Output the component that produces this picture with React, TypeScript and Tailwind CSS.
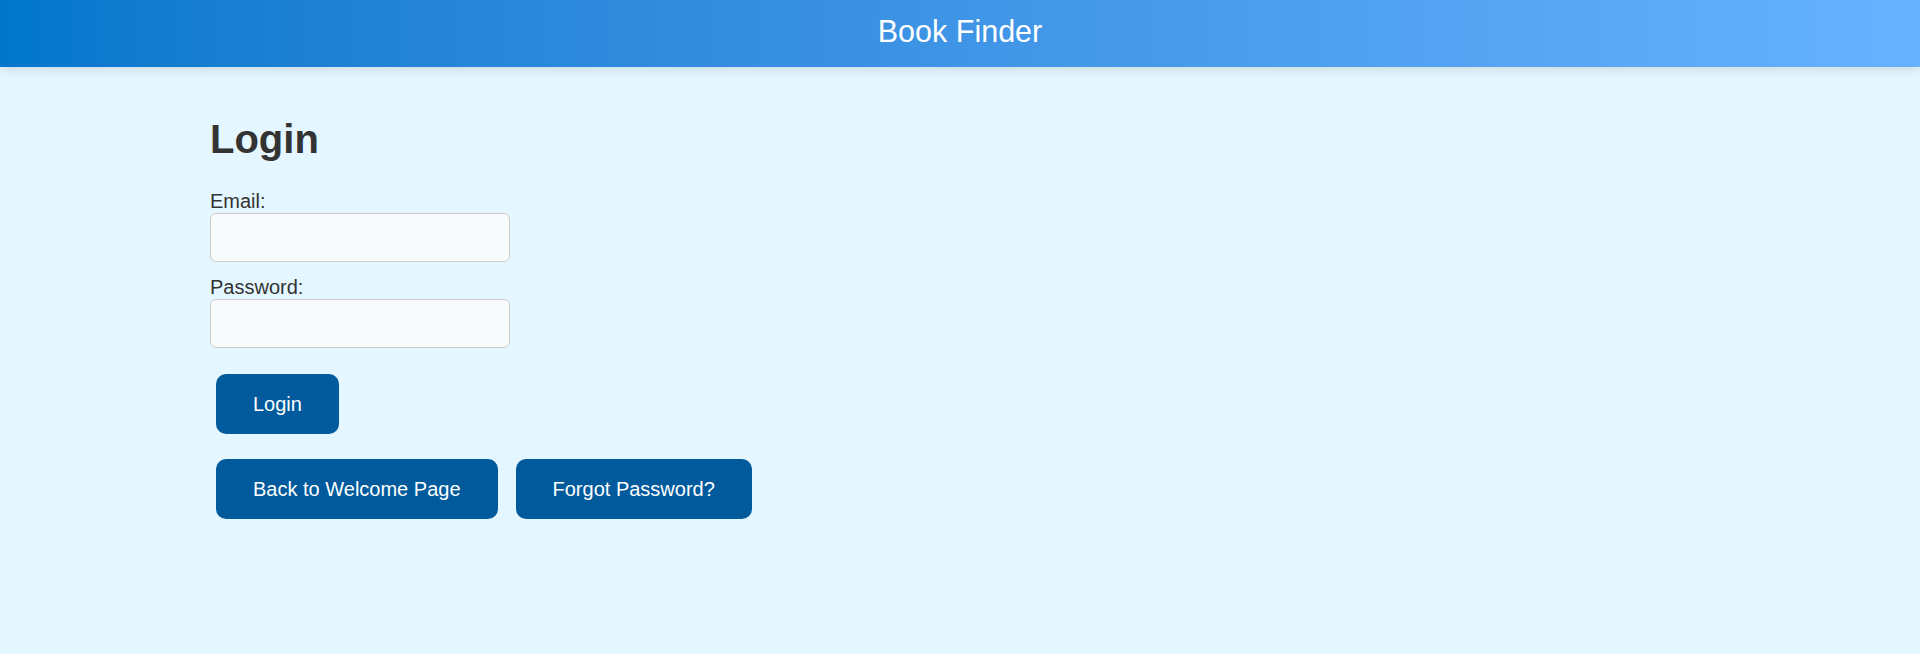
export default function App() {
  return (
    <div className="min-h-[654px] bg-[#e4f6ff] font-['Liberation_Sans',Arial,sans-serif] text-[#333]">
      {/* Header */}
      <header className="h-[67px] bg-gradient-to-r from-[#0077cc] to-[#66b2ff] shadow-[0_2px_10px_rgba(0,0,0,0.12)] pt-[14px]">
        <h1 className="text-center text-white text-[30.5px] leading-[35px] font-normal">Book Finder</h1>
      </header>

      {/* Login form */}
      <main className="max-w-[1500px] mx-auto pt-[50px]">
        <h2 className="text-[40px] leading-[45px] font-bold mb-[28px]">Login</h2>

        <form className="flex flex-col items-start" onSubmit={(e) => e.preventDefault()}>
          <label htmlFor="email" className="block text-[20px] leading-[23px]">Email:</label>
          <input
            id="email"
            type="email"
            className="w-[300px] h-[49px] bg-[#f8f9fa] border border-[#cccccc] rounded-[6px] px-3 text-[20px] outline-none"
          />

          <label htmlFor="password" className="block text-[20px] leading-[23px] mt-[14px]">Password:</label>
          <input
            id="password"
            type="password"
            className="w-[300px] h-[49px] bg-[#f8f9fa] border border-[#cccccc] rounded-[6px] px-3 text-[20px] outline-none"
          />

          <button
            type="submit"
            className="ml-[6px] mt-[26px] h-[60px] px-[37px] bg-[#005a9c] text-white text-[20px] leading-[23px] rounded-[10px]"
          >
            Login
          </button>
        </form>

        <div className="flex gap-[18px] ml-[6px] mt-[25px]">
          <button className="h-[60px] px-[37px] bg-[#005a9c] text-white text-[20px] leading-[23px] rounded-[10px]">
            Back to Welcome Page
          </button>
          <button className="h-[60px] px-[37px] bg-[#005a9c] text-white text-[20px] leading-[23px] rounded-[10px]">
            Forgot Password?
          </button>
        </div>
      </main>
    </div>
  );
}
